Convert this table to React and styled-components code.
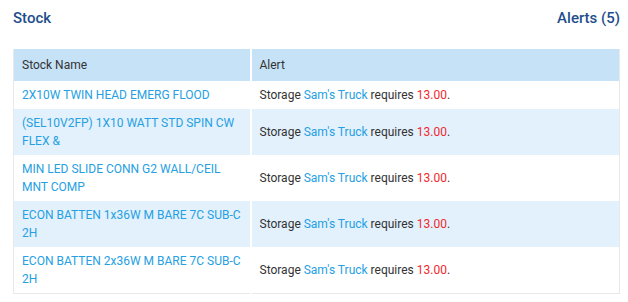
import React from "react";
import styled, { createGlobalStyle } from "styled-components";

const Global = createGlobalStyle`
  html, body { margin: 0; padding: 0; background: #fff; }
  body { font-family: Roboto, "Liberation Sans", Arial, sans-serif; }
`;

const Panel = styled.div`
  width: 628px;
  box-sizing: border-box;
  padding: 8px 8px 0 13px;
`;

const Head = styled.div`
  display: flex;
  justify-content: space-between;
  align-items: center;
  height: 20px;
  margin-bottom: 21px;
`;

const Title = styled.h2`
  margin: 0;
  font-size: 15px;
  font-weight: 500;
  color: #1f4e8c;
`;

const Table = styled.table`
  width: 607px;
  border-collapse: collapse;
  border: 1px solid #e8e8e8;
  border-top: none;
  font-size: 12px;
  table-layout: fixed;
`;

const Th = styled.th`
  background: #c6e2f6;
  color: #333;
  font-weight: 400;
  text-align: left;
  height: 32px;
  padding: 0 8px;
  box-sizing: border-box;
  line-height: 18px;
  border-left: ${(p) => (p.$divider ? "2px solid #fff" : "none")};
`;

const Tr = styled.tr`
  background: ${(p) => (p.$alt ? "#e3f1fd" : "#fff")};
`;

const Td = styled.td`
  padding: 5px 8px;
  line-height: 18px;
  vertical-align: middle;
  color: ${(p) => (p.$link ? "#25a0e2" : "#333")};
  border-left: ${(p) => (p.$divider ? "2px solid #fff" : "none")};
  word-wrap: break-word;
`;

const Link = styled.span`
  color: #25a0e2;
`;

const Qty = styled.span`
  color: #f0282d;
`;

const rows = [
  "2X10W TWIN HEAD EMERG FLOOD",
  "(SEL10V2FP) 1X10 WATT STD SPIN CW FLEX &",
  "MIN LED SLIDE CONN G2 WALL/CEIL MNT COMP",
  "ECON BATTEN 1x36W M BARE 7C SUB-C 2H",
  "ECON BATTEN 2x36W M BARE 7C SUB-C 2H",
];

export default function App() {
  return (
    <>
      <Global />
      <Panel>
        <Head>
          <Title>Stock</Title>
          <Title>Alerts (5)</Title>
        </Head>
        <Table>
          <colgroup>
            <col style={{ width: 237 }} />
            <col />
          </colgroup>
          <thead>
            <tr>
              <Th>Stock Name</Th>
              <Th $divider>Alert</Th>
            </tr>
          </thead>
          <tbody>
            {rows.map((name, i) => (
              <Tr key={i} $alt={i % 2 === 1}>
                <Td $link>{name}</Td>
                <Td $divider>
                  Storage <Link>Sam's Truck</Link> requires <Qty>13.00</Qty>.
                </Td>
              </Tr>
            ))}
          </tbody>
        </Table>
      </Panel>
    </>
  );
}
